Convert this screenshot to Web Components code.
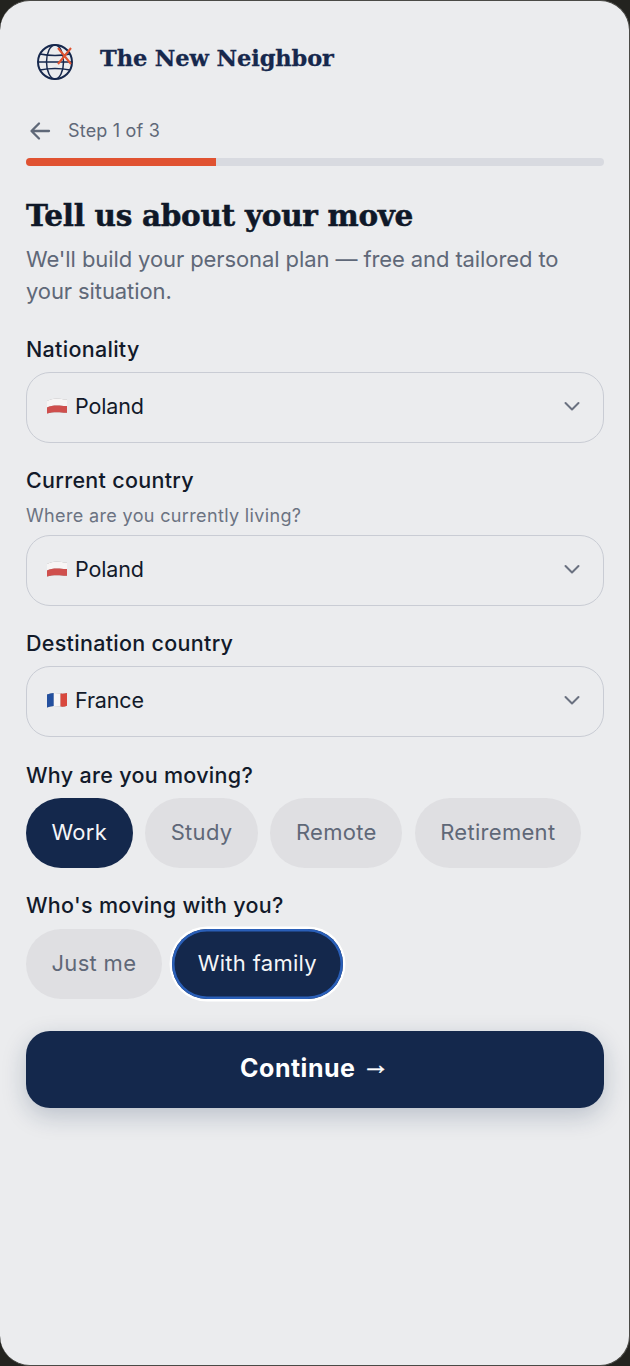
<!DOCTYPE html>
<html lang="en">
<head>
<meta charset="utf-8">
<title>The New Neighbor</title>
<style>
  html, body { margin: 0; padding: 0; background: #23231f; }
  body { font-family: Inter, "Noto Sans", sans-serif; }
</style>
</head>
<body>
<move-app>
  <brand-header>The New Neighbor</brand-header>
  <step-progress step="1" total="3"></step-progress>
  <intro-text heading="Tell us about your move">We'll build your personal plan — free and tailored to your situation.</intro-text>

  <form-field label="Nationality" top="29" gap="10">
    <country-select country="pl">Poland</country-select>
  </form-field>
  <form-field label="Current country" hint="Where are you currently living?" top="24">
    <country-select country="pl">Poland</country-select>
  </form-field>
  <form-field label="Destination country" top="24" gap="10">
    <country-select country="fr">France</country-select>
  </form-field>
  <form-field label="Why are you moving?" top="25" gap="10">
    <chip-row>
      <choice-chip selected>Work</choice-chip>
      <choice-chip>Study</choice-chip>
      <choice-chip>Remote</choice-chip>
      <choice-chip>Retirement</choice-chip>
    </chip-row>
  </form-field>
  <form-field label="Who's moving with you?" top="24" gap="11">
    <chip-row>
      <choice-chip>Just me</choice-chip>
      <choice-chip selected focused>With family</choice-chip>
    </chip-row>
  </form-field>
  <continue-button>Continue <span>→</span></continue-button>
</move-app>

<script>
class MoveApp extends HTMLElement {
  constructor() {
    super();
    this.attachShadow({ mode: "open" }).innerHTML = `
      <style>
        :host { display: block; height: 1366px; box-sizing: border-box; }
        .card {
          box-sizing: border-box;
          height: 1366px;
          padding: 0 25px 0 26px;
          background: #ebecee;
          border-radius: 30px;
          border: 1px solid #4a4a46;
          border-width: 1px 1px 1px 0;
          display: flex;
          flex-direction: column;
        }
      </style>
      <div class="card"><slot></slot></div>`;
  }
}

class BrandHeader extends HTMLElement {
  constructor() {
    super();
    this.attachShadow({ mode: "open" }).innerHTML = `
      <style>
        :host { display: flex; align-items: center; gap: 26px; height: 43px; margin: 39px 0 0 10px; }
        svg { width: 38px; height: 38px; flex: none; }
        .name {
          font: 700 22.5px/43px "DejaVu Serif", serif;
          color: #16284d;
          letter-spacing: -.1px;
          -webkit-text-stroke: .3px #16284d;
          padding-bottom: 6px;
        }
      </style>
      <svg viewBox="0 0 38 38" fill="none">
        <g stroke="#16284d">
          <circle cx="19" cy="19" r="17" stroke-width="2"/>
          <ellipse cx="19" cy="19" rx="8.500" ry="17" stroke-width="1.500"/>
          <path d="M4 11q15 3 30 0M2 19h34M4 27q15-3 30 0" stroke-width="1.400"/>
        </g>
        <path d="M22 5 35 21M35 5 22 21" stroke="#e0532f" stroke-width="2"/>
      </svg>
      <span class="name"><slot></slot></span>`;
  }
}

class StepProgress extends HTMLElement {
  connectedCallback() {
    const step = +this.getAttribute("step"), total = +this.getAttribute("total");
    this.attachShadow({ mode: "open" }).innerHTML = `
      <style>
        :host { display: block; margin-top: 37px; }
        .row { display: flex; align-items: center; gap: 16px; height: 22px; padding-left: 2px; color: #5f6878; }
        svg { width: 24px; height: 24px; flex: none; }
        span { font: 400 18px/22px Inter, sans-serif; letter-spacing: .2px; }
        .track { height: 8px; margin-top: 16px; border-radius: 4px; background: #d8dae0; overflow: hidden; }
        .fill { height: 100%; width: ${100 * step / total - .4}%; background: #e05231; }
      </style>
      <div class="row">
        <svg viewBox="0 0 24 24" fill="none" stroke="currentColor" stroke-width="2.300" stroke-linecap="round" stroke-linejoin="round">
          <path d="M21 12H4M11 4.500 3.500 12l7.500 7.500"/>
        </svg>
        <span>Step ${step} of ${total}</span>
      </div>
      <div class="track"><div class="fill"></div></div>`;
  }
}

class IntroText extends HTMLElement {
  connectedCallback() {
    this.attachShadow({ mode: "open" }).innerHTML = `
      <style>
        :host { display: block; margin-top: 30px; }
        h1 {
          margin: 0;
          font: 700 29.500px/40px "DejaVu Serif", serif;
          color: #0f1828;
          letter-spacing: -.3px;
          -webkit-text-stroke: .5px #0f1828;
        }
        p { margin: 7px 0 0; font: 400 22px/32px Inter, sans-serif; letter-spacing: -.1px; color: #5f6878; }
      </style>
      <h1>${this.getAttribute("heading")}</h1>
      <p><slot></slot></p>`;
  }
}

class FormField extends HTMLElement {
  connectedCallback() {
    const hint = this.getAttribute("hint");
    const gap = this.getAttribute("gap") || 8;
    this.attachShadow({ mode: "open" }).innerHTML = `
      <style>
        :host { display: block; margin-top: ${this.getAttribute("top") || 24}px; }
        label { display: block; font: 450 21.500px/26px Inter, sans-serif; letter-spacing: .3px; color: #121a2a; }
        .hint { font: 400 18px/22px Inter, sans-serif; letter-spacing: .35px; color: #6b7382; margin-top: 12px; }
        .control { margin-top: ${gap}px; }
      </style>
      <label>${this.getAttribute("label")}</label>
      ${hint ? `<div class="hint">${hint}</div>` : ""}
      <div class="control"><slot></slot></div>`;
  }
}

class FlagIcon extends HTMLElement {
  connectedCallback() {
    const flags = {
      pl: `<path d="M0 3C3 1.500 6 .5 10 .5S17 1.800 20 1.500V8C17 8.300 14 7.500 10 7.500S3 8 0 9.500Z" fill="#f7f5f5"/>
           <path d="M0 9.500C3 8 6 7.500 10 7.500S17 8.300 20 8V14.800C17 15 14 14.200 10 14.200S3 14.500 0 15.500Z" fill="#cf4f4d"/>`,
      fr: `<path d="M0 2.500C2.300 1.500 4.500 1 6.800 1V14C4.500 14 2.300 14.500 0 15.500Z" fill="#24509f"/>
           <path d="M6.800 1C9 1 11 1.300 13.500 1.600V14.600C11 14.300 9 14 6.800 14Z" fill="#f7f5f5"/>
           <path d="M13.500 1.600C16 1.800 18 1.500 20 1V13.800C18 14.600 16 14.800 13.500 14.600Z" fill="#d8473d"/>`
    };
    this.attachShadow({ mode: "open" }).innerHTML = `
      <style>
        :host { display: inline-flex; width: 20px; height: 16px; flex: none; margin: 0 1px; }
        svg { width: 20px; height: 16px; overflow: visible; filter: drop-shadow(0 0 .6px rgba(0,0,0,.35)); }
      </style>
      <svg viewBox="0 0 20 16">${flags[this.getAttribute("country")]}</svg>`;
  }
}

class CountrySelect extends HTMLElement {
  connectedCallback() {
    this.attachShadow({ mode: "open" }).innerHTML = `
      <style>
        :host {
          display: flex;
          align-items: center;
          box-sizing: border-box;
          height: 71px;
          padding: 0 21px 4px 19px;
          gap: 7px;
          border: 1px solid #c9ccd4;
          border-radius: 24px;
          font: 400 21.500px/26px Inter, sans-serif;
          letter-spacing: -.15px;
          color: #121a2a;
        }
        .value { flex: 1; }
        svg.chev { width: 20px; height: 20px; flex: none; }
      </style>
      <flag-icon country="${this.getAttribute("country")}"></flag-icon>
      <span class="value"><slot></slot></span>
      <svg class="chev" viewBox="0 0 20 20" fill="none" stroke="#6a7180" stroke-width="2" stroke-linecap="round" stroke-linejoin="round">
        <path d="M3.500 7 10 13.500 16.500 7"/>
      </svg>`;
  }
}

class ChipRow extends HTMLElement {
  constructor() {
    super();
    this.attachShadow({ mode: "open" }).innerHTML = `
      <style>:host { display: flex; gap: 12.500px; }</style><slot></slot>`;
  }
}

class ChoiceChip extends HTMLElement {
  connectedCallback() {
    this.attachShadow({ mode: "open" }).innerHTML = `
      <style>
        :host {
          display: inline-flex;
          align-items: center;
          box-sizing: border-box;
          height: 70px;
          padding: 0 25.500px 2px;
          border-radius: 35px;
          background: #dfdfe2;
          color: #5f6878;
          font: 400 22px/26px Inter, sans-serif;
          letter-spacing: .3px;
        }
        :host([selected]) { background: #14284c; color: #f5f6f8; }
        :host([focused]) { margin-left: -2px; box-shadow: inset 0 0 0 2.500px #2a5fb8, 0 0 0 2.500px #fff; }
      </style>
      <slot></slot>`;
  }
}

class ContinueButton extends HTMLElement {
  constructor() {
    super();
    this.attachShadow({ mode: "open" }).innerHTML = `
      <style>
        :host {
          display: flex;
          align-items: center;
          justify-content: center;
          gap: 6px;
          box-sizing: border-box;
          height: 77px;
          padding-bottom: 3px;
          margin-top: 32px;
          border-radius: 24px;
          background: #14284c;
          color: #fff;
          font: 700 25px/30px Inter, sans-serif;
          letter-spacing: .5px;
          box-shadow: 0 8px 24px rgba(20, 40, 76, .22);
        }
        ::slotted(span) {
          font-family: "Liberation Sans", sans-serif;
          font-size: 28px;
          -webkit-text-stroke: .5px #fff;
          transform: translateY(-3px);
        }
      </style>
      <slot></slot>`;
  }
}

customElements.define("flag-icon", FlagIcon);
customElements.define("move-app", MoveApp);
customElements.define("brand-header", BrandHeader);
customElements.define("step-progress", StepProgress);
customElements.define("intro-text", IntroText);
customElements.define("form-field", FormField);
customElements.define("country-select", CountrySelect);
customElements.define("chip-row", ChipRow);
customElements.define("choice-chip", ChoiceChip);
customElements.define("continue-button", ContinueButton);
</script>
</body>
</html>
